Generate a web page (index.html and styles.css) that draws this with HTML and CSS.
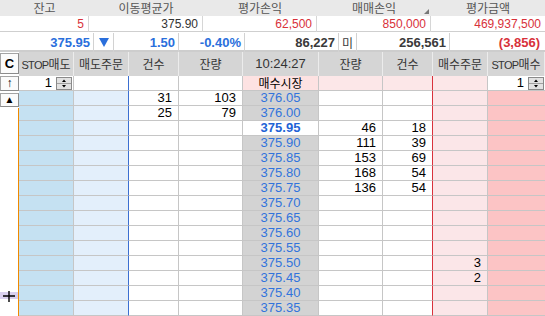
FILE: index.html
```html
<!DOCTYPE html>
<html lang="ko">
<head>
    <meta charset="UTF-8">
    <meta name="viewport" content="width=device-width, initial-scale=1.0">
    <title>호가 주문</title>
    <link rel="stylesheet" href="styles.css">
</head>
<body>
    <div class="summary-head">
        <div>잔고</div>
        <div>이동평균가</div>
        <div>평가손익</div>
        <div class="sortable">매매손익<span class="sort-mark"></span></div>
        <div>평가금액</div>
    </div>
    <div class="summary-vals">
        <div class="red">5</div>
        <div>375.90</div>
        <div class="red">62,500</div>
        <div class="red">850,000</div>
        <div class="red">469,937,500</div>
    </div>

    <div class="quote">
        <div class="blue">375.95</div>
        <div class="arrow">
            <svg width="10" height="9" viewBox="0 0 10 9"><path d="M0 0h10L5 9z" fill="#2a6fdc"/></svg>
        </div>
        <div class="blue">1.50</div>
        <div class="blue">-0.40%</div>
        <div>86,227</div>
        <div class="mi">미</div>
        <div>256,561</div>
        <div class="red">(3,856)</div>
    </div>

    <div class="book">
        <div class="side-tools">
            <div class="tool tool-c">C</div>
            <div class="tool tool-up">↑</div>
            <div class="tool tool-tri">▲</div>
            <div class="rail">
                <svg class="plus" width="18" height="12" viewBox="0 0 18 12">
                    <rect x="0" y="1" width="18" height="7" fill="#d9d0ee"/>
                    <path d="M3 5h12M9 0v11" stroke="#000" stroke-width="1.4"/>
                </svg>
            </div>
        </div>

        <div class="ladder">
            <div class="row head">
                <div><span class="latin">STOP</span>매도</div>
                <div>매도주문</div>
                <div>건수</div>
                <div>잔량</div>
                <div class="time">10:24:27</div>
                <div>잔량</div>
                <div>건수</div>
                <div>매수주문</div>
                <div><span class="latin">STOP</span>매수</div>
            </div>

            <div class="row market">
                <div class="spin-cell">1<svg class="spin" width="16" height="13" viewBox="0 0 16 13"><rect x="0.5" y="0.5" width="15" height="12" fill="#e2e2e2" stroke="#8a8a8a"/><path d="M1 6.5h14" stroke="#a0a0a0"/><path d="M6 5h4L8 2.5z M6 8h4L8 10.5z" fill="#000"/></svg></div>
                <div></div>
                <div></div>
                <div></div>
                <div>매수시장</div>
                <div></div>
                <div></div>
                <div></div>
                <div class="spin-cell">1<svg class="spin" width="16" height="13" viewBox="0 0 16 13"><rect x="0.5" y="0.5" width="15" height="12" fill="#e2e2e2" stroke="#8a8a8a"/><path d="M1 6.5h14" stroke="#a0a0a0"/><path d="M6 5h4L8 2.5z M6 8h4L8 10.5z" fill="#000"/></svg></div>
            </div>

            <div class="row"><div></div><div></div><div>31</div><div>103</div><div>376.05</div><div></div><div></div><div></div><div></div></div>
            <div class="row"><div></div><div></div><div>25</div><div>79</div><div>376.00</div><div></div><div></div><div></div><div></div></div>
            <div class="row now"><div></div><div></div><div></div><div></div><div>375.95</div><div>46</div><div>18</div><div></div><div></div></div>
            <div class="row"><div></div><div></div><div></div><div></div><div>375.90</div><div>111</div><div>39</div><div></div><div></div></div>
            <div class="row"><div></div><div></div><div></div><div></div><div>375.85</div><div>153</div><div>69</div><div></div><div></div></div>
            <div class="row"><div></div><div></div><div></div><div></div><div>375.80</div><div>168</div><div>54</div><div></div><div></div></div>
            <div class="row"><div></div><div></div><div></div><div></div><div>375.75</div><div>136</div><div>54</div><div></div><div></div></div>
            <div class="row"><div></div><div></div><div></div><div></div><div>375.70</div><div></div><div></div><div></div><div></div></div>
            <div class="row"><div></div><div></div><div></div><div></div><div>375.65</div><div></div><div></div><div></div><div></div></div>
            <div class="row"><div></div><div></div><div></div><div></div><div>375.60</div><div></div><div></div><div></div><div></div></div>
            <div class="row"><div></div><div></div><div></div><div></div><div>375.55</div><div></div><div></div><div></div><div></div></div>
            <div class="row"><div></div><div></div><div></div><div></div><div>375.50</div><div></div><div></div><div>3</div><div></div></div>
            <div class="row"><div></div><div></div><div></div><div></div><div>375.45</div><div></div><div></div><div>2</div><div></div></div>
            <div class="row"><div></div><div></div><div></div><div></div><div>375.40</div><div></div><div></div><div></div><div></div></div>
            <div class="row"><div></div><div></div><div></div><div></div><div>375.35</div><div></div><div></div><div></div><div></div></div>
        </div>
    </div>
</body>
</html>
```

FILE: styles.css
```css
* {
    margin: 0;
    padding: 0;
    box-sizing: border-box;
}

body {
    width: 545px;
    height: 316px;
    overflow: hidden;
    background: #fff;
    font-family: "Liberation Sans", "Noto Sans CJK KR", sans-serif;
    font-size: 12px;
    color: #222;
}

/* top summary */
.summary-head,
.summary-vals {
    display: grid;
    grid-template-columns: 89px 114px 114px 114px 114px;
    height: 16px;
}

.summary-head {
    background: #e9e9e9;
}

.summary-head div {
    position: relative;
    text-align: center;
    line-height: 16px;
    color: #555;
    font-family: "Noto Sans CJK KR", sans-serif;
    font-size: 12px;
}

.sort-mark {
    position: absolute;
    right: 2px;
    bottom: 2px;
    width: 0;
    height: 0;
    border-left: 5px solid transparent;
    border-bottom: 5px solid #777;
}

.summary-vals {
    border-bottom: 1px solid #cfcfcf;
}

.summary-vals div {
    text-align: right;
    padding-right: 4px;
    line-height: 16px;
    color: #333;
    border-right: 1px solid #d6d6d6;
}

.summary-vals div:last-child {
    border-right: none;
}

.red {
    color: #d8313a !important;
}

/* quote strip */
.quote {
    display: grid;
    grid-template-columns: 94px 20px 65px 66px 94px 18px 93px 95px;
    height: 20px;
    border-top: 1px solid #fff;
    border-bottom: 2px solid #cdcdcd;
}

.quote div {
    text-align: right;
    padding-right: 3px;
    line-height: 19px;
    font-weight: bold;
    font-size: 13px;
    color: #3a3a3a;
    border-right: 1px solid #d2d2d2;
}

.quote div:last-child {
    border-right: none;
    padding-right: 5px;
}

.quote .blue {
    color: #2a6fdc;
}

.quote .arrow {
    display: flex;
    align-items: center;
    justify-content: center;
    padding: 0;
}

.quote .mi {
    text-align: center;
    padding: 0;
    font-family: "Noto Sans CJK KR", sans-serif;
    font-weight: normal;
    font-size: 12px;
}

/* order book */
.book {
    display: flex;
    height: 264px;
}

.side-tools {
    width: 19px;
    display: flex;
    flex-direction: column;
}

.tool {
    width: 19px;
    border: 1px solid #a4a4a4;
    border-right-color: #8c8c8c;
    border-bottom-color: #8c8c8c;
    background: #fbfbfb;
    text-align: center;
    color: #000;
}

.tool-c {
    height: 21px;
    margin-top: 1px;
    margin-bottom: 2px;
    font-weight: bold;
    font-size: 13px;
    line-height: 19px;
}

.tool-up {
    height: 15px;
    margin-bottom: 2px;
    font-size: 12px;
    line-height: 13px;
}

.tool-tri {
    height: 14px;
    margin-bottom: 1px;
    font-size: 10px;
    line-height: 12px;
}

.rail {
    flex-grow: 1;
    display: flex;
    flex-direction: column;
    border-right: 1px solid #f08a00;
}

.plus {
    margin-top: auto;
    margin-bottom: 13px;
}

.ladder {
    flex-grow: 1;
}

.row {
    display: grid;
    grid-template-columns: 55px 55px 50px 64px 76px 64px 50px 55px 57px;
    height: 15px;
}

.row > div {
    border-right: 1px solid #c6c6c6;
    border-bottom: 1px solid #c6c6c6;
    text-align: right;
    padding-right: 6px;
    font-size: 13px;
    line-height: 14px;
    color: #000;
}

.row > div:last-child {
    border-right: none;
}

.row > :nth-child(1) { background: #c5e1f2; }
.row > :nth-child(2) { background: #e3effb; border-right-color: #3b6fd1; }
.row > :nth-child(5) {
    background: #d3d3d3;
    color: #3274dc;
    text-align: center;
    padding-right: 0;
}
.row > :nth-child(7) { border-right-color: #d8323c; }
.row > :nth-child(8) { background: #fbe6e8; }
.row > :nth-child(9) { background: #fcc4c5; }

.row.now > :nth-child(5) {
    background: #fff;
    color: #1f63d6;
    font-weight: bold;
}

/* header row */
.row.head {
    height: 24px;
}

.row.head > div {
    background: #d5d5d5;
    border-right: 1px solid #ececec;
    border-bottom: 1px solid #a9a9a9;
    text-align: center;
    padding-right: 0;
    font-family: "Noto Sans CJK KR", sans-serif;
    font-size: 12px;
    line-height: 23px;
    color: #333;
}

.row.head > div.time {
    font-family: "Liberation Sans", sans-serif;
    font-size: 13px;
}

.latin {
    font-family: "Liberation Sans", sans-serif;
    font-size: 11px;
    letter-spacing: -0.7px;
}

/* market row */
.row.market > div {
    background: #fff;
}

.row.market > :nth-child(5) {
    background: #fde2e2;
    color: #000;
    font-family: "Noto Sans CJK KR", sans-serif;
    font-size: 12px;
}

.row.market > :nth-child(6),
.row.market > :nth-child(7),
.row.market > :nth-child(8) {
    background: #fce7e8;
}

.spin-cell {
    display: flex;
    justify-content: flex-end;
    align-items: center;
    gap: 4px;
    padding-right: 1px !important;
}
```
